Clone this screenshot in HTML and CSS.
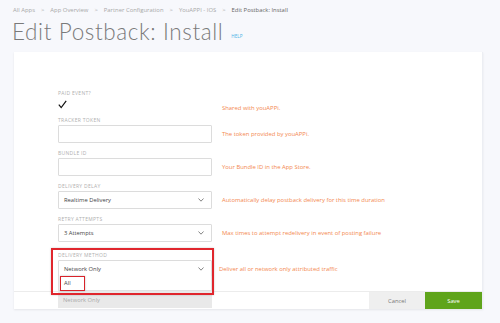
FILE: index.html
```html
<!DOCTYPE html>
<html lang="en">
<head>
  <meta charset="UTF-8">
  <title>Edit Postback: Install</title>
  <link rel="stylesheet" href="styles.css">
</head>
<body>
  <!-- Breadcrumbs -->
  <nav class="crumbs">
    <span>All Apps</span><i>&gt;</i>
    <span>App Overview</span><i>&gt;</i>
    <span>Partner Configuration</span><i>&gt;</i>
    <span>YouAPPI - IOS</span><i>&gt;</i>
    <span class="current">Edit Postback: Install</span>
  </nav>

  <div class="title-row">
    <h1>Edit Postback: Install</h1>
    <a class="help">HELP</a>
  </div>

  <div class="card">
    <div class="form">
      <div class="field field-check">
        <label>PAID EVENT?</label>
        <div class="check">
          <svg width="9" height="9" viewBox="0 0 9 9"><path d="M0.8 4.6 L3.2 7.6 L8.2 0.8" fill="none" stroke="#111" stroke-width="1.2"/></svg>
        </div>
        <p class="hint">Shared with youAPPi.</p>
      </div>

      <div class="field">
        <label>TRACKER TOKEN</label>
        <div class="input"></div>
        <p class="hint">The token provided by youAPPi.</p>
      </div>

      <div class="field">
        <label>BUNDLE ID</label>
        <div class="input"></div>
        <p class="hint">Your Bundle ID in the App Store.</p>
      </div>

      <div class="field">
        <label>DELIVERY DELAY</label>
        <div class="input select">
          <span>Realtime Delivery</span>
          <svg width="6" height="4" viewBox="0 0 6 4"><path d="M0.5 0.5 L3 3.2 L5.5 0.5" fill="none" stroke="#666" stroke-width="0.8"/></svg>
        </div>
        <p class="hint">Automatically delay postback delivery for this time duration</p>
      </div>

      <div class="field">
        <label>RETRY ATTEMPTS</label>
        <div class="input select">
          <span>3 Attempts</span>
          <svg width="6" height="4" viewBox="0 0 6 4"><path d="M0.5 0.5 L3 3.2 L5.5 0.5" fill="none" stroke="#666" stroke-width="0.8"/></svg>
        </div>
        <p class="hint">Max times to attempt redelivery in event of posting failure</p>
      </div>

      <div class="field field-method">
        <div class="annotation"></div>
        <label>DELIVERY METHOD</label>
        <div class="input select open">
          <span>Network Only</span>
          <svg width="6" height="4" viewBox="0 0 6 4"><path d="M0.5 0.5 L3 3.2 L5.5 0.5" fill="none" stroke="#666" stroke-width="0.8"/></svg>
          <ul class="options">
            <li class="opt-all"><span class="mark"></span>All</li>
            <li class="opt-selected">Network Only</li>
          </ul>
        </div>
        <p class="hint hint-method">Deliver all or network only attributed traffic</p>
      </div>
    </div>

    <div class="footer">
      <button class="btn-cancel">Cancel</button>
      <button class="btn-save">Save</button>
    </div>
  </div>
</body>
</html>
```

FILE: styles.css
```css
/* Reset & base */
* { margin: 0; padding: 0; box-sizing: border-box; }
body {
  background: #f7f8fc;
  color: #555;
  font-family: 'Open Sans', 'Liberation Sans', sans-serif;
  width: 500px;
  height: 323px;
  overflow: hidden;
}
svg { display: block; }

/* Breadcrumbs */
.crumbs {
  display: flex;
  align-items: center;
  padding: 6px 0 0 13px;
  height: 13px;
  font-size: 5.9px;
  color: #a8a8a8;
}
.crumbs i {
  font-style: normal;
  margin: 0 6px;
}
.crumbs .current { color: #666; }

/* Title */
.title-row {
  display: flex;
  align-items: flex-end;
  padding: 4px 0 0 12px;
  height: 39px;
}
h1 {
  font-family: 'Lato', sans-serif;
  font-weight: 300;
  font-size: 22.5px;
  line-height: 26px;
  color: #7a7a7a;
  letter-spacing: 0.6px;
  margin-bottom: 7px;
}
.help {
  font-size: 4.6px;
  color: #4ab3e6;
  margin: 0 0 13px 8px;
}

/* Card */
.card {
  width: 469px;
  margin-left: 14px;
  background: #fff;
  box-shadow: 0 1px 2px rgba(0,0,0,0.08);
  border-right: 1px solid #eceef3;
}
.form {
  padding: 38px 0 14px 44px;
  display: flex;
  flex-direction: column;
}
.field {
  display: grid;
  grid-template-columns: 154px 1fr;
  column-gap: 10px;
  margin-bottom: 7px;
  position: relative;
}
.field label {
  grid-column: 1;
  font-size: 5px;
  line-height: 7px;
  letter-spacing: 0.3px;
  color: #b0b0b0;
  margin-bottom: 1px;
}
.field .hint {
  grid-column: 2;
  grid-row: 2;
  align-self: center;
  font-size: 5.9px;
  line-height: 8px;
  color: #f3884f;
}
.field-check { margin-bottom: 8px; }
.field-check .hint { align-self: end; margin-bottom: -3px; }
.check {
  grid-column: 1;
  height: 11px;
  padding-top: 2px;
}

.input {
  grid-column: 1;
  height: 18px;
  border: 1px solid #dcdcdc;
  border-radius: 1px;
}
.select {
  display: flex;
  align-items: center;
  justify-content: space-between;
  padding: 0 7px 0 5px;
  font-size: 5.8px;
  color: #444;
  position: relative;
}

/* Delivery method with open dropdown */
.field-method { margin-top: 3px; margin-bottom: 0; }
.field-method .select { height: 17px; }
.hint-method { margin-left: -3px; }
.options {
  list-style: none;
  position: absolute;
  top: 100%;
  left: -1px;
  right: -1px;
  z-index: 2;
}
.options li {
  display: flex;
  align-items: center;
  padding-left: 5px;
  font-size: 5.8px;
}
.opt-all {
  height: 15px;
  background: #fff;
  border: 1px solid #e2e2e2;
  border-top: none;
  color: #444;
  position: relative;
}
.opt-all .mark {
  position: absolute;
  left: 1px;
  top: 0;
  width: 25px;
  height: 15px;
  border: 1px solid #d8232a;
  box-shadow: 0 0 2px rgba(0,0,0,0.25);
}
.opt-selected {
  height: 17px;
  background: #e9e9e9;
  color: #a9a9a9;
}
.annotation {
  position: absolute;
  top: -4px;
  left: -7px;
  width: 163px;
  height: 47px;
  border: 2px solid #e0262d;
  box-shadow: 0 0 2px rgba(0,0,0,0.2);
  z-index: 3;
  pointer-events: none;
}

/* Footer */
.footer {
  display: flex;
  justify-content: flex-end;
  border-top: 1px solid #ececec;
  height: 18px;
}
.footer button {
  border: none;
  font-family: inherit;
  font-size: 5.8px;
  height: 17px;
}
.btn-cancel {
  width: 56px;
  background: #efefef;
  color: #777;
}
.btn-save {
  width: 57px;
  background: #5fa41b;
  color: #fff;
}
```
